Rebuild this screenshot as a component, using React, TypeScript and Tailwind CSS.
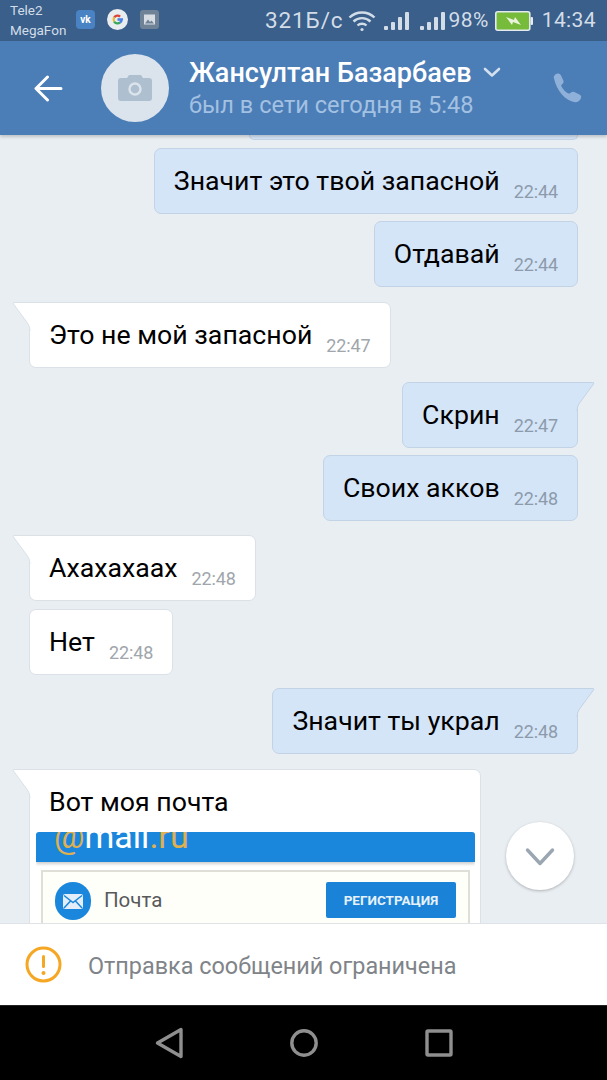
const font = { fontFamily: 'Roboto, "Noto Sans", sans-serif' };

function Tail({ out }: { out?: boolean }) {
  if (out) {
    return (
      <svg className="absolute top-[-1px] right-[-18px]" width="19" height="30" viewBox="0 0 19 30">
        <path d="M0 0.5H17Q18.5 0.5 17.5 2L3.5 21Q1 24.5 1 29H0Z" fill="#d5e5f8" />
        <path d="M0 0.5H17Q18.5 0.5 17.5 2L3.5 21Q1 24.5 1 29" fill="none" stroke="#c3d3e6" />
      </svg>
    );
  }
  return (
    <svg className="absolute top-[-1px] left-[-18px]" width="19" height="30" viewBox="0 0 19 30">
      <path d="M19 0.5H2Q0.5 0.5 1.5 2L15.5 21Q18 24.5 18 29H19Z" fill="#ffffff" />
      <path d="M19 0.5H2Q0.5 0.5 1.5 2L15.5 21Q18 24.5 18 29" fill="none" stroke="#dbe1e7" />
    </svg>
  );
}

function Bubble({ text, time, out, tail, className }: { text: string; time: string; out?: boolean; tail?: boolean; className: string }) {
  return (
    <div
      className={`relative shrink-0 h-[66px] flex items-center pl-[19px] pr-[19px] rounded-[7px] border ${
        out ? 'self-end mr-[29px] bg-[#d5e5f8] border-[#c3d3e6]' : 'self-start ml-[29px] bg-white border-[#dbe1e7]'
      } ${tail ? (out ? 'rounded-tr-none' : 'rounded-tl-none') : ''} ${className}`}
    >
      {tail && <Tail out={out} />}
      <span className="text-[26.7px] leading-[32px] text-black whitespace-nowrap">{text}</span>
      <span className={`ml-[14px] mt-[21px] text-[18px] leading-[22px] tracking-[-0.1px] ${out ? 'text-[#8c9bab]' : 'text-[#a0a6ac]'}`}>{time}</span>
    </div>
  );
}

function StatusBar() {
  return (
    <div className="shrink-0 h-[41px] bg-[#395f8a] flex items-center pl-[10px] pr-[11px] text-[#d3dde8]">
      <div className="w-[66px] text-[13.5px] leading-[20px] -mt-[1px]">
        <div>Tele2</div>
        <div>MegaFon</div>
      </div>
      <div className="w-[19px] h-[19px] rounded-[4px] bg-[#4a83c4] flex items-center justify-center text-[10px] font-bold text-white -mt-[3px]">vk</div>
      <svg className="ml-[12px] -mt-[3px]" width="21" height="21" viewBox="0 0 24 24">
        <circle cx="12" cy="12" r="12" fill="#e9edf0" />
        <path d="M8.2 9.6A4.5 4.5 0 0 1 15 8.7" fill="none" stroke="#d9453a" strokeWidth="2.6" />
        <path d="M8.2 14.4a4.5 4.5 0 0 1 0-4.8" fill="none" stroke="#eab92d" strokeWidth="2.6" />
        <path d="M8.2 14.4A4.5 4.5 0 0 0 15 15.4" fill="none" stroke="#3aa757" strokeWidth="2.6" />
        <path d="M12 12h5a4.8 4.8 0 0 1-2 3.4" fill="none" stroke="#4a80e8" strokeWidth="2.6" />
      </svg>
      <svg className="ml-[12px] -mt-[3px]" width="19" height="19" viewBox="0 0 19 19">
        <rect width="19" height="19" rx="3" fill="#6f8296" />
        <rect x="4" y="4.5" width="11" height="10" fill="#d7dde3" />
        <path d="M5 13.5l3-4 2 2.5 1.5-1.5 2.5 3z" fill="#6f8296" />
      </svg>
      <span className="ml-auto text-[22.5px] leading-none tracking-[0.9px]">321Б/с</span>
      <svg className="ml-[4px]" width="28" height="22" viewBox="0 0 28 22" fill="none" stroke="#d3dde8" strokeWidth="2.4">
        <path d="M1.5 7.5a18 18 0 0 1 25 0" />
        <path d="M5.5 11.5a12.5 12.5 0 0 1 17 0" />
        <path d="M9.5 15.5a6.5 6.5 0 0 1 9 0" />
        <circle cx="14" cy="19.5" r="1.6" fill="#d3dde8" stroke="none" />
      </svg>
      <svg className="ml-[8px]" width="25" height="20" viewBox="0 0 25 20" fill="#d3dde8">
        <rect x="0" y="15" width="4" height="4" rx="1" />
        <rect x="7" y="11" width="4" height="8" rx="1" />
        <rect x="14" y="6" width="4" height="13" rx="1" />
        <rect x="21" y="1" width="4" height="18" rx="1" />
      </svg>
      <svg className="ml-[11px]" width="25" height="20" viewBox="0 0 25 20" fill="#d3dde8">
        <rect x="0" y="15" width="4" height="4" rx="1" />
        <rect x="7" y="11" width="4" height="8" rx="1" />
        <rect x="14" y="6" width="4" height="13" rx="1" />
        <rect x="21" y="1" width="4" height="18" rx="1" />
      </svg>
      <span className="ml-[4px] text-[21px] leading-none tracking-[0.4px]">98%</span>
      <svg className="ml-[6px]" width="38" height="20" viewBox="0 0 38 20">
        <rect x="0.8" y="0.8" width="34" height="18.4" rx="2" fill="#76bb3a" stroke="#e4eaf0" strokeWidth="1.6" />
        <rect x="35.5" y="6" width="2.5" height="8" rx="1" fill="#e4eaf0" />
        <path d="M11 6l8 3 1-3 6 8-8-3-1 3z" fill="#e9f2dc" />
      </svg>
      <span className="ml-[9px] text-[21px] leading-none tracking-[0.4px]">14:34</span>
    </div>
  );
}

function Header() {
  return (
    <div className="relative z-10 shrink-0 h-[94px] bg-[#4b7db7] flex items-center pl-[34px] shadow-[0_2px_3px_rgba(0,0,0,0.18)]">
      <svg width="29" height="27" viewBox="0 0 29 27" fill="none" stroke="#ffffff" strokeWidth="3" strokeLinecap="round" strokeLinejoin="round">
        <path d="M27 13.5H2.5M13.5 2L2 13.5 13.5 25" />
      </svg>
      <div className="ml-[38px] w-[68px] h-[68px] rounded-full bg-[#dbe4ec] flex items-center justify-center">
        <svg width="34" height="26" viewBox="0 0 34 26">
          <path d="M3 3h6l2-3h12l2 3h6a3 3 0 0 1 3 3v17a3 3 0 0 1-3 3H3a3 3 0 0 1-3-3V6a3 3 0 0 1 3-3z" fill="#aebfcf" />
          <circle cx="17" cy="14" r="5.5" fill="none" stroke="#dbe4ec" strokeWidth="2.4" />
        </svg>
      </div>
      <div className="ml-[20px] flex flex-col">
        <div className="flex items-center">
          <span className="text-[27px] leading-[30px] font-medium text-white whitespace-nowrap">Жансултан Базарбаев</span>
          <svg className="ml-[11px]" width="18" height="11" viewBox="0 0 18 11" fill="none" stroke="#d3e0ee" strokeWidth="2.6" strokeLinecap="round" strokeLinejoin="round">
            <path d="M2 2l7 6.5L16 2" />
          </svg>
        </div>
        <span className="text-[23.6px] leading-[28px] text-[#a3c1e2] whitespace-nowrap mt-[3px]">был в сети сегодня в 5:48</span>
      </div>
      <svg className="ml-auto mr-[25px]" width="30" height="30" viewBox="0 0 30 30" fill="#8fb0d8">
        <path d="M2 5.5C1 3.5 3 1 5.5 0.5 7.5 0.2 8.5 1.2 9.3 3L11.3 7.5C12 9 11.5 10 10.4 11L9 12.4C10.5 16 13.5 19.3 17.3 20.8L19 19.4C20 18.6 21 18.4 22.3 19L27 21.2C28.8 22 29.6 23.3 29 25 28.2 27.5 25.5 29.5 23 29.2 13 28 4.5 17 2 5.5Z" />
      </svg>
    </div>
  );
}

function MailBubble() {
  return (
    <div className="relative shrink-0 self-start ml-[29px] mt-[15px] w-[452px] h-[300px] bg-white border border-[#dbe1e7] rounded-[7px] rounded-tl-none pl-[6px] pr-[5px]">
      <Tail />
      <div className="pl-[13px] pt-[14px] text-[26.7px] leading-[36px] text-black">Вот моя почта</div>
      <div className="mt-[12px] h-[200px] overflow-hidden rounded-t-[3px]">
        {/* screenshot crop: the logo is cut by the top of the picture */}
        <div className="h-[30px] bg-[#1a87dc] overflow-hidden pl-[18px] shadow-[0_2px_3px_rgba(0,0,0,0.2)]">
          <div className="text-[34px] leading-[9px] font-normal text-white">
            <span className="text-[#e0b050]">@</span>mail<span className="text-[#e0b050]">.ru</span>
          </div>
        </div>
        <div className="mt-[8px] mx-[5px] h-[160px] bg-[#fffffa] border-2 border-[#dfdfd8] flex items-start pl-[12px] pr-[12px] pt-[10px]">
          <div className="w-[36px] h-[38px] rounded-full bg-[#1a87dc] flex items-center justify-center">
            <svg width="20" height="15" viewBox="0 0 20 15">
              <rect width="20" height="15" rx="2" fill="#e3eef8" />
              <path d="M1 1.5l9 7 9-7M1 14l6.5-7M19 14l-6.5-7" fill="none" stroke="#1a87dc" strokeWidth="1.5" />
            </svg>
          </div>
          <span className="ml-[13px] mt-[4px] text-[20.5px] leading-[28px] text-[#58595b]">Почта</span>
          <div className="ml-auto w-[130px] h-[36px] bg-[#1a83d8] rounded-[2px] flex items-center justify-center text-[13.5px] font-bold text-[#e6f2fb]">РЕГИСТРАЦИЯ</div>
        </div>
      </div>
    </div>
  );
}

export default function App() {
  return (
    <div className="w-[607px] h-[1080px] flex flex-col overflow-hidden bg-black" style={font}>
      <StatusBar />
      <Header />

      {/* Messages */}
      <div className="relative flex-1 min-h-0 flex flex-col overflow-hidden bg-[#e9eef3]">
        <div className="shrink-0 self-end mr-[29px] w-[329px] h-[5px] bg-[#d5e5f8] border border-t-0 border-[#c3d3e6] rounded-b-[7px]" />
        <Bubble out text="Значит это твой запасной" time="22:44" className="mt-[8px]" />
        <Bubble out text="Отдавай" time="22:44" className="mt-[7px]" />
        <Bubble tail text="Это не мой запасной" time="22:47" className="mt-[15px]" />
        <Bubble out tail text="Скрин" time="22:47" className="mt-[14px]" />
        <Bubble out text="Своих акков" time="22:48" className="mt-[7px]" />
        <Bubble tail text="Ахахахаах" time="22:48" className="mt-[14px]" />
        <Bubble text="Нет" time="22:48" className="mt-[8px]" />
        <Bubble out tail text="Значит ты украл" time="22:48" className="mt-[13px]" />
        <MailBubble />

        {/* Scroll down button */}
        <div className="absolute left-[506px] top-[687px] w-[68px] h-[68px] rounded-full bg-white shadow-[0_1px_3px_rgba(0,0,0,0.25)] flex items-center justify-center">
          <svg className="mt-[2px]" width="30" height="20" viewBox="0 0 30 20" fill="none" stroke="#9aa6b2" strokeWidth="3.4" strokeLinecap="round" strokeLinejoin="round">
            <path d="M2.5 3L15 16.5 27.5 3" />
          </svg>
        </div>
      </div>

      {/* Restricted notice */}
      <div className="shrink-0 h-[82px] bg-white border-t border-[#dfe3e7] flex items-center pl-[25px]">
        <svg width="37" height="37" viewBox="0 0 37 37">
          <circle cx="18.5" cy="18.5" r="16.5" fill="none" stroke="#f5a623" strokeWidth="3" />
          <rect x="17" y="9" width="3" height="13" rx="1.5" fill="#f5a623" />
          <circle cx="18.5" cy="27" r="2" fill="#f5a623" />
        </svg>
        <span className="ml-[26px] mt-[2px] text-[23.4px] leading-[28px] text-[#7f8489] whitespace-nowrap">Отправка сообщений ограничена</span>
      </div>

      {/* Android nav */}
      <div className="shrink-0 h-[75px] bg-black flex items-center justify-center gap-[107px] border-t border-[#222]">
        <svg width="28" height="32" viewBox="0 0 28 32" fill="none" stroke="#8f8f8f" strokeWidth="3.4" strokeLinejoin="round">
          <path d="M26 2.5V29.5L2.5 16Z" />
        </svg>
        <svg width="28" height="30" viewBox="0 0 28 30" fill="none" stroke="#8f8f8f" strokeWidth="3.4">
          <circle cx="14" cy="15" r="12.2" />
        </svg>
        <svg width="28" height="28" viewBox="0 0 28 28" fill="none" stroke="#8f8f8f" strokeWidth="3.4" strokeLinejoin="round">
          <rect x="2" y="2" width="24" height="24" rx="1" />
        </svg>
      </div>
    </div>
  );
}
